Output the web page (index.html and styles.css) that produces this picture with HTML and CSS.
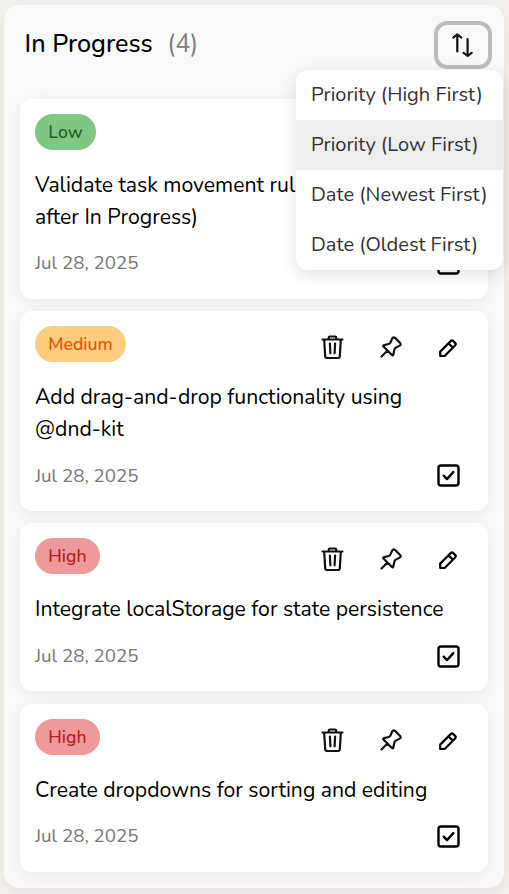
FILE: index.html
```
<!DOCTYPE html>
<html lang="en">
<head>
<meta charset="utf-8">
<title>In Progress</title>
<link rel="stylesheet" href="styles.css">
</head>
<body>
<svg class="defs" aria-hidden="true">
  <symbol id="trash" viewBox="0 0 23 25"><path d="M1.500 4.500h20M7.800 4V2.700q0-1.200 1.200-1.200h5q1.200 0 1.200 1.200V4M3.200 5l1 16.500q.1 1.500 1.600 1.500h11.400q1.500 0 1.600-1.500l1-16.500M8.900 8.500l.5 9.800M14.100 8.500l-.5 9.800"/></symbol>
  <symbol id="pin" viewBox="0 0 22 22"><path d="M1.500 20.500L7 15M12.300 2.300q1.200-1.800 3-.2l4.600 4.600q1.700 1.700-.3 2.900l-4.100 2.300q-1 .6-1.200 1.800l-.9 4.600q-.4 1.800-1.700.5l-8-8q-1.300-1.300.5-1.700L8.700 8q1.200-.3 1.700-1.400z"/></symbol>
  <symbol id="pencil" viewBox="0 0 20 20"><path d="M2.200 13.600L12.700 3.100q1.300-1.300 2.600 0l1.800 1.800q1.300 1.300 0 2.600L6.600 18H2.200zM10.500 5.300l4.400 4.400"/></symbol>
  <symbol id="check" viewBox="0 0 23 23"><rect x="1.500" y="1.500" width="20" height="20" rx="2.500"/><path d="M6.700 11.700l3.300 3.400 6.300-7"/></symbol>
</svg>
<main class="column">
  <header class="column-header">
    <h1>In Progress</h1><span class="count">(4)</span>
    <div class="sort">
      <button class="sort-button" aria-label="Sort"><svg width="22" height="26" viewBox="0 0 22 26"><path d="M6.300 19.500V2.500M2.300 5.500l4-3.200 4 3.200M16.600 7v17M12.600 20.800l4 3.200 4-3.200"/></svg></button>
      <ul class="menu">
        <li>Priority (High First)</li>
        <li class="active">Priority (Low First)</li>
        <li>Date (Newest First)</li>
        <li>Date (Oldest First)</li>
      </ul>
    </div>
  </header>
  <section class="cards">
    <article class="card">
      <div class="top"><span class="badge low">Low</span></div>
      <h2>Validate task movement rules<br>after In Progress)</h2>
      <footer><time>Jul 28, 2025</time><svg class="check"><use href="#check"/></svg></footer>
    </article>
    <article class="card">
      <div class="top"><span class="badge medium">Medium</span><div class="actions"><svg class="trash"><use href="#trash"/></svg><svg class="pin"><use href="#pin"/></svg><svg class="pencil"><use href="#pencil"/></svg></div></div>
      <h2>Add drag-and-drop functionality using<br>@dnd-kit</h2>
      <footer><time class="low-line">Jul 28, 2025</time><svg class="check"><use href="#check"/></svg></footer>
    </article>
    <article class="card short">
      <div class="top"><span class="badge high">High</span><div class="actions"><svg class="trash"><use href="#trash"/></svg><svg class="pin"><use href="#pin"/></svg><svg class="pencil"><use href="#pencil"/></svg></div></div>
      <h2>Integrate localStorage for state persistence</h2>
      <footer><time>Jul 28, 2025</time><svg class="check"><use href="#check"/></svg></footer>
    </article>
    <article class="card short last">
      <div class="top"><span class="badge high">High</span><div class="actions"><svg class="trash"><use href="#trash"/></svg><svg class="pin"><use href="#pin"/></svg><svg class="pencil"><use href="#pencil"/></svg></div></div>
      <h2>Create dropdowns for sorting and editing</h2>
      <footer><time>Jul 28, 2025</time><svg class="check"><use href="#check"/></svg></footer>
    </article>
  </section>
</main>
</body>
</html>
```
FILE: styles.css
```
* { box-sizing: border-box; }
body { margin: 0; padding: 5px 5px 6px 4px; height: 894px; overflow: hidden; background: #f0efeb; font-family: Nunito, Lato, sans-serif; color: #000; }
.defs { display: none; }
svg { fill: none; stroke: #111; stroke-width: 2.2; stroke-linecap: round; stroke-linejoin: round; }
.column { height: 883px; padding: 0 16px; background: #f9f9f9; border-radius: 15px; box-shadow: 0 4px 12px rgba(0,0,0,.05); }
.column-header { display: flex; align-items: flex-start; height: 78px; padding-left: 4.6px; }
h1, .count { margin: 23px 0 0; font-size: 25.2px; line-height: 32px; white-space: nowrap; }
h1 { font-weight: 500; }
.count { margin-left: 14.4px; color: #808080; }
.sort { position: relative; margin: 16px -4px 0 auto; }
.sort-button { display: flex; align-items: center; justify-content: center; width: 58px; height: 48px; padding: 0 2px 0 0; border: 4px solid #bcbcbc; border-radius: 13px; background: #f9f9f9; }
.menu { position: absolute; z-index: 2; top: 49px; right: -11px; width: 207px; margin: 0; padding: 0; list-style: none; overflow: hidden; border-radius: 12px; background: #fff; box-shadow: 0 4px 16px rgba(0,0,0,.12); }
.menu li { height: 50px; padding-left: 15px; font-size: 20.05px; line-height: 49px; color: #333; white-space: nowrap; }
.menu .active { background: #eee; }
.cards { display: flex; flex-direction: column; gap: 12px; margin-top: 16px; }
.card { padding: 15px; height: 200px; border-radius: 12px; background: #fff; box-shadow: 0 4px 16px rgba(0,0,0,.06); }
.short { height: 168px; }
.last { margin-top: 1px; }
.top { display: flex; justify-content: space-between; height: 36px; }
.badge { display: flex; align-items: center; justify-content: center; height: 36px; border-radius: 18px; font-size: 17.7px; font-weight: 500; }
.low { width: 61px; background: #81c784; color: #1b5e20; }
.medium { width: 91px; background: #ffcc80; color: #e65100; }
.high { width: 65px; background: #ef9a9a; color: #b71c1c; }
.actions { display: flex; align-items: center; padding: 6px 15px 0 0; }
.trash { width: 23px; height: 25px; }
.pin { width: 22px; height: 22px; margin-left: 36px; }
.pencil { width: 20px; height: 20px; margin-left: 36px; margin-top: 2px; stroke: #000; }
h2 { margin: 19px 0 0; font-size: 21.2px; line-height: 32px; font-weight: 400; white-space: nowrap; }
footer { display: flex; align-items: center; justify-content: space-between; margin-top: 14px; height: 32px; padding-right: 13px; }
.short:not(.last) footer { margin-top: 15px; }
time { font-size: 18.75px; color: #777; }
.low-line { padding-top: 2px; }
.check { width: 23px; height: 23px; stroke: #000; stroke-width: 2.4; }
```
